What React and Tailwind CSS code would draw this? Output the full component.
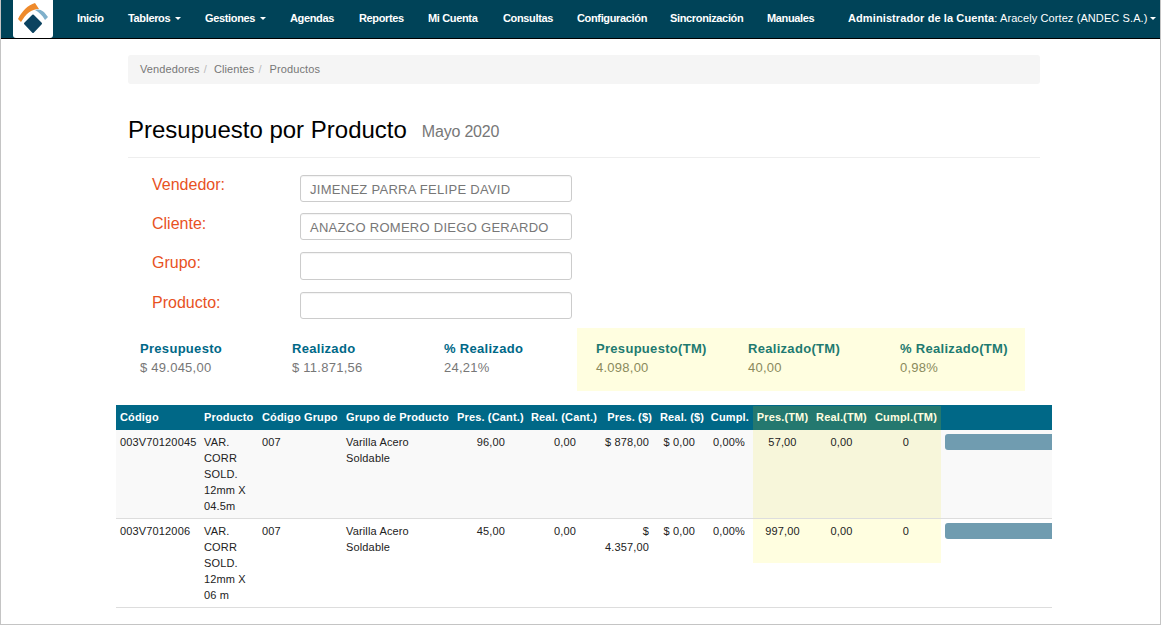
const NAV = [
  ["Inicio", 51, false],
  ["Tableros", 77, true],
  ["Gestiones", 85, true],
  ["Agendas", 69, false],
  ["Reportes", 69, false],
  ["Mi Cuenta", 75, false],
  ["Consultas", 74, false],
  ["Configuración", 93, false],
  ["Sincronización", 97, false],
  ["Manuales", 81, false],
];

const FIELDS = [
  ["Vendedor:", "JIMENEZ PARRA FELIPE DAVID", "h-[27px]", "mb-[11px]", ""],
  ["Cliente:", "ANAZCO ROMERO DIEGO GERARDO", "h-[27px]", "mb-[12px]", "pt-[1px]"],
  ["Grupo:", "", "h-[28px]", "mb-[12px]", "pt-[1px]"],
  ["Producto:", "", "h-[27px]", "mb-0", "pt-[1px]"],
];

const HEAD = [
  ["Código", "w-[84px] text-left"],
  ["Producto", "w-[58px] text-left"],
  ["Código Grupo", "w-[84px] text-left"],
  ["Grupo de Producto", "w-[111px] text-left"],
  ["Pres. (Cant.)", "w-[74px] text-right"],
  ["Real. (Cant.)", "w-[74px] text-right"],
  ["Pres. ($)", "w-[55px] text-right"],
  ["Real. ($)", "w-[50px] text-right"],
  ["Cumpl.", "w-[47px] text-right"],
];

const ROWS = [
  {
    code: "003V70120045",
    product: "VAR. CORR SOLD. 12mm X 04.5m",
    cant: "96,00",
    pres: "$ 878,00",
    tm: "57,00",
    rowBg: "bg-[#f9f9f9]",
    tmBg: "bg-[#f7f6da]",
  },
  {
    code: "003V7012006",
    product: "VAR. CORR SOLD. 12mm X 06 m",
    cant: "45,00",
    pres: "$ 4.357,00",
    tm: "997,00",
    rowBg: "bg-white",
    tmBg: "bg-[linear-gradient(#fffee0,#fffee0)] bg-no-repeat bg-[length:100%_44px]",
  },
];

const td = "align-top border-b border-[#dddddd] pt-[4px] px-[4px] pb-[4px] leading-[16px]";
const tmTh = "text-center font-bold whitespace-nowrap bg-[#24786f] text-[#fffee0] shadow-[inset_0_1px_0_#006887]";

function Logo() {
  return (
    <div className="w-[40px] h-[38px] bg-white rounded-b-[3px] ml-[13px] shrink-0">
      <svg width="40" height="38" viewBox="0 0 40 38">
        <path d="M5 19 C9 11 15 5 22 3 L26 9 C18 9 13 14 8 22 Z" fill="#ee8a2c" />
        <path d="M22 10 C27 8 31 11 35 17 L32 20 C29 15 26 12 22 10 Z" fill="#7fb0cb" />
        <path d="M20 15.5 L28 23.5 L20 32 L12 23.5 Z" fill="#0c4360" stroke="#0c4360" strokeWidth="2" strokeLinejoin="round" />
      </svg>
    </div>
  );
}

function Caret() {
  return <span className="inline-block ml-[2px] align-middle w-0 h-0 border-x-[3px] border-x-transparent border-t-[3px] border-t-white" />;
}

function Stat({ title, value, tm }) {
  return (
    <div className="w-[152px] shrink-0 pl-[12px]">
      <div className={`text-[13px] leading-[19px] font-bold tracking-[0.3px] ${tm ? "text-[#1e7a70]" : "text-[#006887]"}`}>{title}</div>
      <div className={`text-[13px] leading-[19px] tracking-[0.25px] ${tm ? "text-[#8a8a5c]" : "text-[#777777]"}`}>{value}</div>
    </div>
  );
}

export default function App() {
  return (
    <div className="w-[1161px] h-[625px] bg-white border-x border-b border-[#c4c4c4] overflow-hidden font-['Liberation_Sans',Arial,sans-serif] box-border">
      <nav className="h-[39px] bg-[#004358] border-b border-black flex text-white text-[11px] font-bold -ml-px w-[1161px]">
        <Logo />
        <div className="flex ml-[11px] h-[36px] items-center tracking-[-0.35px]">
          {NAV.map(([label, w, caret]) => (
            <div key={label} style={{ width: w }} className="px-[13px] whitespace-nowrap">
              {label}
              {caret && <> <Caret /></>}
            </div>
          ))}
        </div>
        <div className="ml-[13px] h-[36px] flex items-center whitespace-nowrap tracking-[0.1px]">
          <span>Administrador de la Cuenta<span className="font-normal">: Aracely Cortez (ANDEC S.A.)</span></span>
          <Caret />
        </div>
      </nav>

      <main className="w-[912px] ml-[127px]">
        <div className="mt-[16px] h-[29px] bg-[#f5f5f5] rounded-[3px] px-[12px] flex items-center text-[11px] tracking-[0.1px] text-[#777777]">
          <span>Vendedores</span>
          <span className="text-[#bbbbbb] pl-[4px] pr-[7px]">/</span>
          <span>Clientes</span>
          <span className="text-[#bbbbbb] pl-[4px] pr-[8px]">/</span>
          <span>Productos</span>
        </div>

        <div className="mt-[32px] h-[42px] border-b border-[#eeeeee] flex items-start text-black">
          <h1 className="text-[24px] leading-[28px]">Presupuesto por Producto</h1>
          <span className="ml-[15px] mt-[6px] text-[16px] leading-[20px] tracking-[-0.2px] text-[#777777]">Mayo 2020</span>
        </div>

        <form className="mt-[17px] pl-[24px]">
          {FIELDS.map(([label, value, h, mb, lp]) => (
            <div key={label} className={`flex ${mb}`}>
              <label className={`w-[148px] text-[16px] leading-[20px] text-[#e8521f] ${lp}`}>{label}</label>
              <div className={`w-[272px] ${h} border border-[#cccccc] rounded-[3px] pl-[9px] pt-[2px] flex items-center text-[13px] tracking-[0.28px] text-[#777777] shadow-[inset_0_1px_1px_rgba(0,0,0,0.05)]`}>
                {value}
              </div>
            </div>
          ))}
        </form>

        <div className="mt-[9px] flex h-[63px]">
          <div className="flex pt-[11px]">
            <Stat title="Presupuesto" value="$ 49.045,00" />
            <Stat title="Realizado" value="$ 11.871,56" />
            <div className="w-[145px] pl-[12px]">
              <div className="text-[13px] leading-[19px] font-bold tracking-[0.3px] text-[#006887]">% Realizado</div>
              <div className="text-[13px] leading-[19px] tracking-[0.25px] text-[#777777]">24,21%</div>
            </div>
          </div>
          <div className="flex bg-[#fffee0] pt-[11px] pl-[7px] w-[448px]">
            <Stat tm title="Presupuesto(TM)" value="4.098,00" />
            <Stat tm title="Realizado(TM)" value="40,00" />
            <Stat tm title="% Realizado(TM)" value="0,98%" />
          </div>
        </div>
      </main>

      <div className="mt-[14px] ml-[115px] w-[936px] overflow-hidden">
        <table className="table-fixed w-[936px] border-collapse text-[11px] tracking-[0.15px] text-[#222222]">
          <thead>
            <tr className="bg-[#006887] text-white font-bold h-[25px]">
              {HEAD.map(([label, cls]) => (
                <th key={label} className={`${cls} px-[4px] font-bold whitespace-nowrap`}>{label}</th>
              ))}
              <th className={`w-[59px] ${tmTh}`}>Pres.(TM)</th>
              <th className={`w-[59px] ${tmTh}`}>Real.(TM)</th>
              <th className={`w-[70px] ${tmTh}`}>Cumpl.(TM)</th>
              <th className="w-[111px]"></th>
            </tr>
          </thead>
          <tbody>
            {ROWS.map((r) => (
              <tr key={r.code} className={r.rowBg}>
                <td className={td}>{r.code}</td>
                <td className={td}><div className="h-[80px]">{r.product}</div></td>
                <td className={td}>007</td>
                <td className={td}>Varilla Acero Soldable</td>
                <td className={`${td} text-right !pr-[22px]`}>{r.cant}</td>
                <td className={`${td} text-right !pr-[25px]`}>0,00</td>
                <td className={`${td} text-right !pr-[7px] !pl-[1px]`}>{r.pres}</td>
                <td className={`${td} text-right !pr-[11px]`}>$ 0,00</td>
                <td className={`${td} text-right !pr-[8px]`}>0,00%</td>
                <td className={`${td} text-center ${r.tmBg}`}>{r.tm}</td>
                <td className={`${td} text-center ${r.tmBg}`}>0,00</td>
                <td className={`${td} text-center ${r.tmBg}`}>0</td>
                <td className={td}>
                  <div className="w-[120px] h-[16px] bg-[#709cb0] rounded-[3px]"></div>
                </td>
              </tr>
            ))}
          </tbody>
        </table>
      </div>
    </div>
  );
}
